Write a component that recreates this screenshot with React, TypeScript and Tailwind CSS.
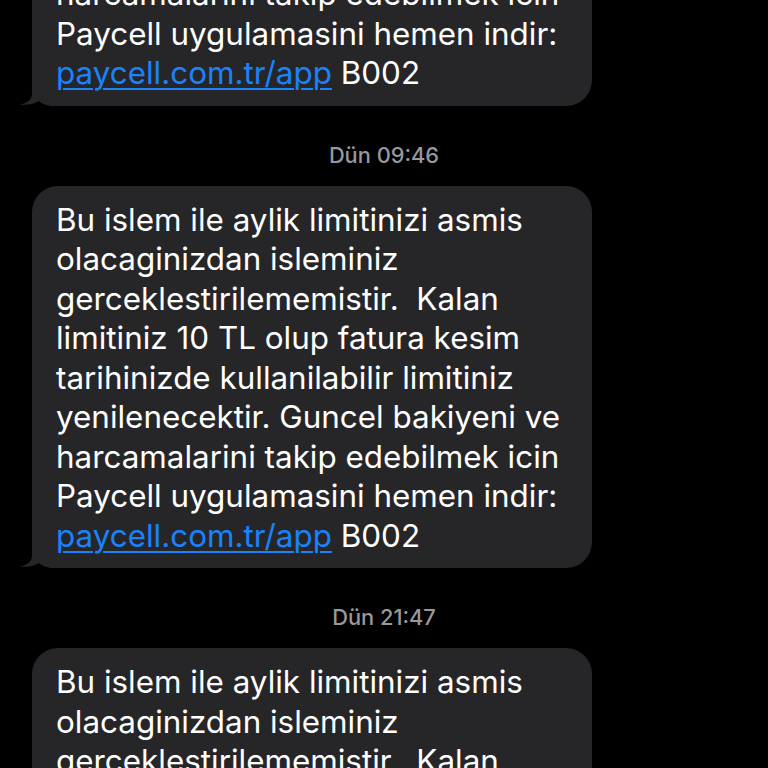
import React from "react";

const lines: (string | { link: string; rest: string })[] = [
  "Bu islem ile aylik limitinizi asmis",
  "olacaginizdan isleminiz",
  "gerceklestirilememistir.  Kalan",
  "limitiniz 10 TL olup fatura kesim",
  "tarihinizde kullanilabilir limitiniz",
  "yenilenecektir. Guncel bakiyeni ve",
  "harcamalarini takip edebilmek icin",
  "Paycell uygulamasini hemen indir:",
  { link: "paycell.com.tr/app", rest: " B002" },
];

function Tail() {
  return (
    <svg
      className="absolute left-[-12px] bottom-0"
      width="40"
      height="26"
      viewBox="0 0 40 26"
    >
      <path
        d="M12 0 L12 13 C12 19 9 22.5 0 24.5 C8 25.5 14 24 19 21 C22 23.5 26 26 34 26 L40 26 L40 0 Z"
        fill="#262628"
      />
    </svg>
  );
}

function Bubble({ className = "" }: { className?: string }) {
  return (
    <div
      className={`relative w-[560px] rounded-[26px] bg-[#262628] pl-[24px] pr-[8px] pt-[15px] pb-[12px] ${className}`}
    >
      <Tail />
      <div className="relative text-[31.4px] leading-[39.5px] text-white font-['Inter',sans-serif]">
        {lines.map((l, i) =>
          typeof l === "string" ? (
            <div key={i} className="whitespace-pre">
              {l}
            </div>
          ) : (
            <div key={i} className="whitespace-pre">
              <span className="text-[#1a82fb] underline underline-offset-[4px] decoration-[2px]">
                {l.link}
              </span>
              {l.rest}
            </div>
          )
        )}
      </div>
    </div>
  );
}

function Stamp({ text }: { text: string }) {
  return (
    <div className="pt-[37px] pb-[19px] flex justify-center pr-[32px]">
      <div className="text-[21.8px] leading-[24px] text-[#98989d] font-medium font-['Inter',sans-serif]">
        {text}
      </div>
    </div>
  );
}

export default function App() {
  return (
    <div className="w-[768px] h-[768px] bg-black overflow-hidden">
      <div className="pl-[32px]">
        <Bubble className="mt-[-277px]" />
        <Stamp text="Dün 09:46" />
        <Bubble />
        <Stamp text="Dün 21:47" />
        <Bubble />
      </div>
    </div>
  );
}
